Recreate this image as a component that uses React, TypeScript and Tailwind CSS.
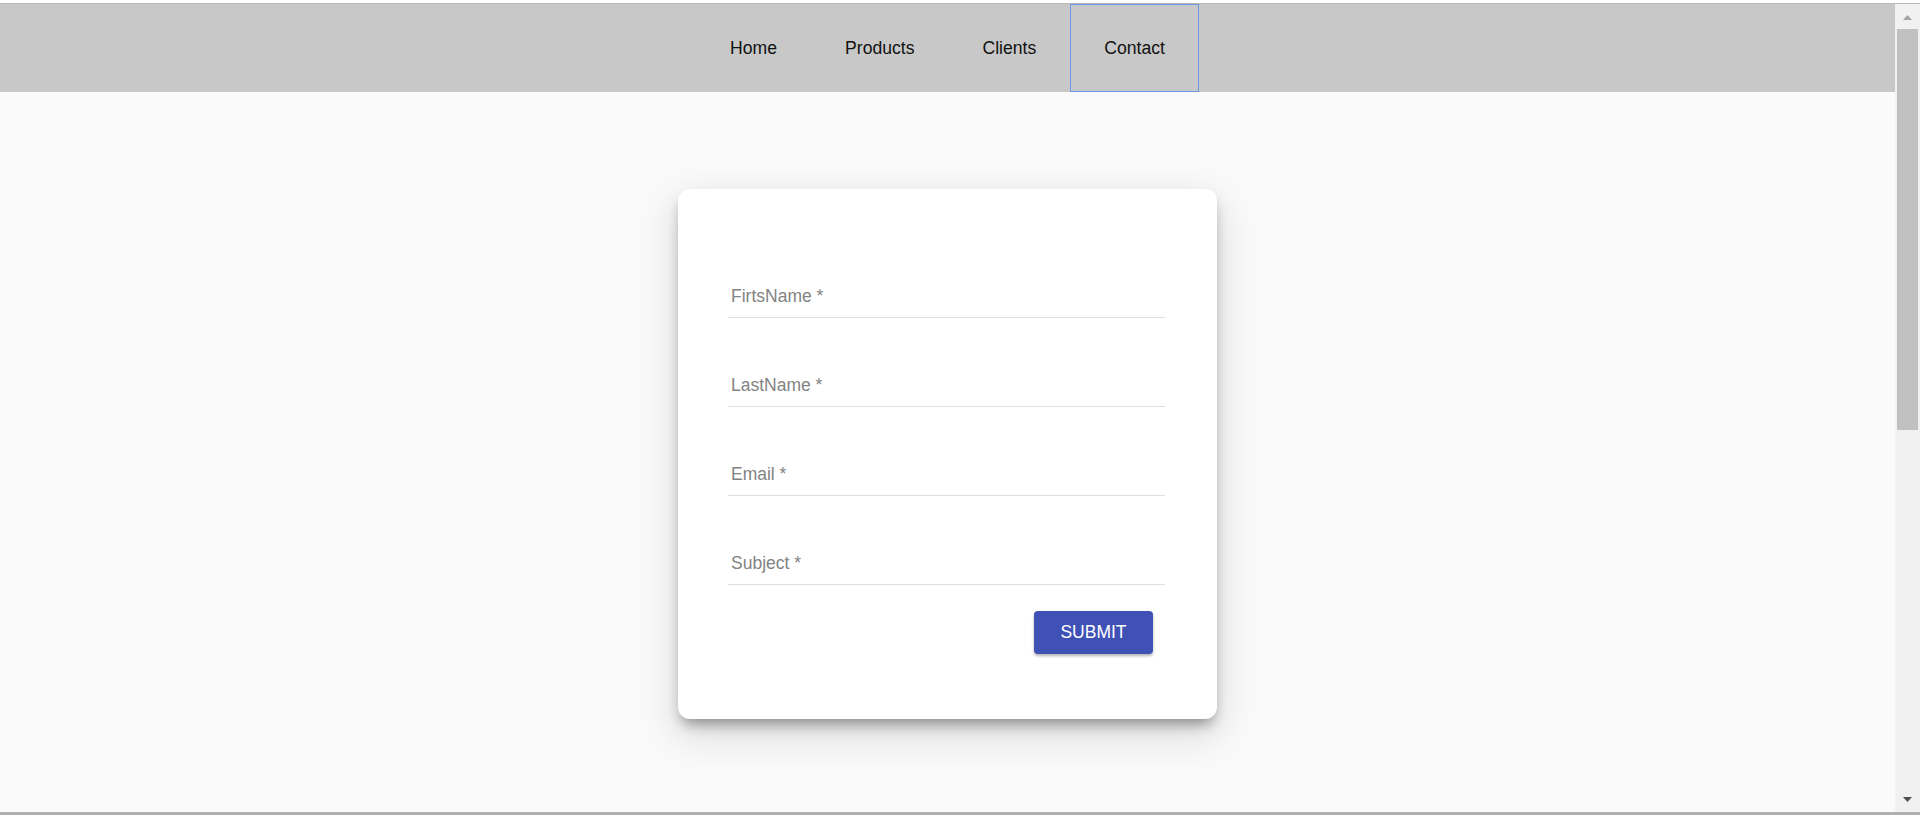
import React from "react";

const links = ["Home", "Products", "Clients", "Contact"];
const fields = ["FirtsName *", "LastName *", "Email *", "Subject *"];

function Nav() {
  return (
    <nav className="h-[88px] bg-[#c8c8c8] flex justify-center shrink-0">
      {links.map((l) => (
        <a
          key={l}
          className={`h-full px-[33px] flex items-center text-[17.6px] text-[#111] cursor-pointer ${
            l === "Contact" ? "border border-[#6d98e6]" : "border border-transparent"
          }`}
        >
          {l}
        </a>
      ))}
    </nav>
  );
}

function ContactForm() {
  return (
    <div className="mx-auto mt-[97px] w-[539px] bg-white rounded-[12px] pl-[50px] pr-[52px] pt-[40px] pb-[65px] flex flex-col shadow-[0_9px_14px_-4px_rgba(0,0,0,0.38),0_14px_40px_4px_rgba(0,0,0,0.12)]">
      {fields.map((f) => (
        <div key={f} className="h-[89px] flex items-end border-b border-[#dedede] pb-[11px] pl-[3px]">
          <span className="text-[17.5px] leading-[20px] text-[#838383]">{f}</span>
        </div>
      ))}
      <button className="self-end mr-[12px] mt-[26px] h-[43px] w-[119px] bg-[#3f51b5] text-white rounded-[4px] text-[17.5px] uppercase shadow-[0_2px_3px_rgba(0,0,0,0.3)]">
        Submit
      </button>
    </div>
  );
}

function Scrollbar() {
  return (
    <div className="w-[25px] bg-[#f1f1f1] flex flex-col shrink-0">
      <div className="h-[25px] flex items-center justify-center pt-[1px]">
        <svg width="9" height="5" viewBox="0 0 9 5">
          <path d="M4.5 0 L9 5 L0 5 Z" fill="#a3a3a3" />
        </svg>
      </div>
      <div className="h-[401px] mx-[2px] bg-[#c1c1c1]" />
      <div className="flex-1" />
      <div className="h-[25px] flex items-center justify-center">
        <svg width="9" height="5" viewBox="0 0 9 5">
          <path d="M0 0 L9 0 L4.5 5 Z" fill="#505050" />
        </svg>
      </div>
    </div>
  );
}

export default function App() {
  return (
    <div className="w-[1920px] h-[815px] flex flex-col bg-white overflow-hidden font-['Liberation_Sans',Arial,sans-serif]">
      <div className="h-[3px] bg-white shrink-0" />
      <div className="h-[1px] bg-[#b8b8b8] shrink-0" />
      <div className="flex-1 flex min-h-0">
        <main className="flex-1 bg-[#fafafa] flex flex-col overflow-hidden">
          <Nav />
          <ContactForm />
        </main>
        <Scrollbar />
      </div>
      <div className="h-[3px] bg-[#b0b0b0] shrink-0" />
    </div>
  );
}
